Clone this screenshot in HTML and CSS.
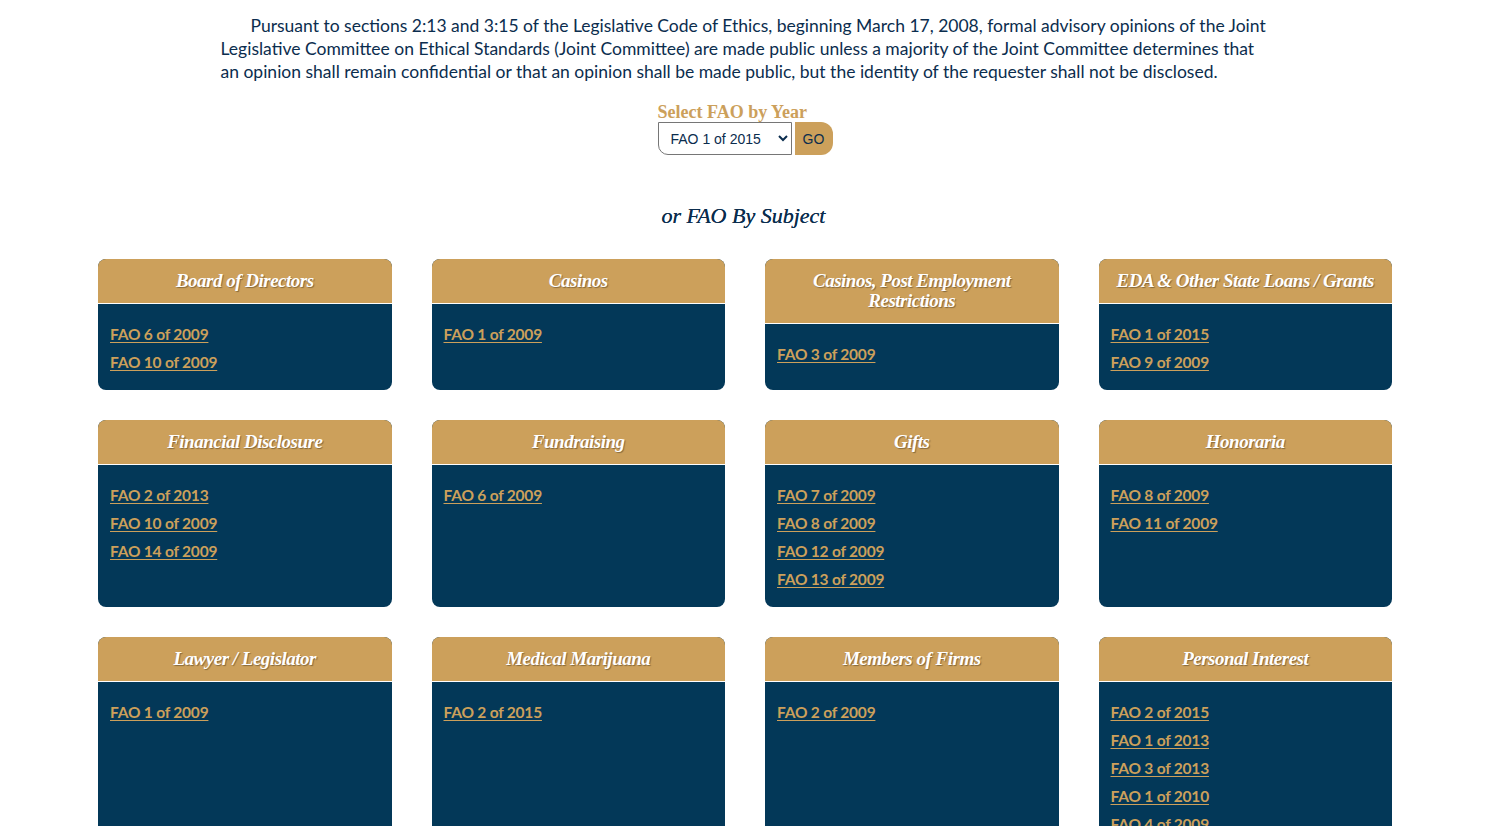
FILE: index.html
```html
<!DOCTYPE html>
<html lang="en">
<head>
<meta charset="utf-8">
<title>Formal Advisory Opinions</title>
<link rel="stylesheet" href="styles.css">
</head>
<body>
<main class="page">
  <p class="intro">Pursuant to sections 2:13 and 3:15 of the Legislative Code of Ethics, beginning March 17, 2008, formal advisory opinions of the Joint Legislative Committee on Ethical Standards (Joint Committee) are made public unless a majority of the Joint Committee determines that an opinion shall remain confidential or that an opinion shall be made public, but the identity of the requester shall not be disclosed.</p>

  <form class="year-form">
    <label class="year-label" for="year">Select FAO by Year</label>
    <div class="year-row">
      <select id="year" class="year-select">
        <option>FAO 1 of 2015</option>
        <option>FAO 2 of 2015</option>
        <option>FAO 1 of 2013</option>
      </select>
      <button type="button" class="go-btn">GO</button>
    </div>
  </form>

  <h2 class="subject-title">or FAO By Subject</h2>

  <section class="grid">
    <div class="card">
      <h3 class="card-head">Board of Directors</h3>
      <div class="card-body"><a href="#">FAO 6 of 2009</a><a href="#">FAO 10 of 2009</a></div>
    </div>
    <div class="card">
      <h3 class="card-head">Casinos</h3>
      <div class="card-body"><a href="#">FAO 1 of 2009</a></div>
    </div>
    <div class="card">
      <h3 class="card-head">Casinos, Post Employment Restrictions</h3>
      <div class="card-body"><a href="#">FAO 3 of 2009</a></div>
    </div>
    <div class="card">
      <h3 class="card-head">EDA &amp; Other State Loans / Grants</h3>
      <div class="card-body"><a href="#">FAO 1 of 2015</a><a href="#">FAO 9 of 2009</a></div>
    </div>

    <div class="card">
      <h3 class="card-head">Financial Disclosure</h3>
      <div class="card-body"><a href="#">FAO 2 of 2013</a><a href="#">FAO 10 of 2009</a><a href="#">FAO 14 of 2009</a></div>
    </div>
    <div class="card">
      <h3 class="card-head">Fundraising</h3>
      <div class="card-body"><a href="#">FAO 6 of 2009</a></div>
    </div>
    <div class="card">
      <h3 class="card-head">Gifts</h3>
      <div class="card-body"><a href="#">FAO 7 of 2009</a><a href="#">FAO 8 of 2009</a><a href="#">FAO 12 of 2009</a><a href="#">FAO 13 of 2009</a></div>
    </div>
    <div class="card">
      <h3 class="card-head">Honoraria</h3>
      <div class="card-body"><a href="#">FAO 8 of 2009</a><a href="#">FAO 11 of 2009</a></div>
    </div>

    <div class="card">
      <h3 class="card-head">Lawyer / Legislator</h3>
      <div class="card-body"><a href="#">FAO 1 of 2009</a></div>
    </div>
    <div class="card">
      <h3 class="card-head">Medical Marijuana</h3>
      <div class="card-body"><a href="#">FAO 2 of 2015</a></div>
    </div>
    <div class="card">
      <h3 class="card-head">Members of Firms</h3>
      <div class="card-body"><a href="#">FAO 2 of 2009</a></div>
    </div>
    <div class="card">
      <h3 class="card-head">Personal Interest</h3>
      <div class="card-body"><a href="#">FAO 2 of 2015</a><a href="#">FAO 1 of 2013</a><a href="#">FAO 3 of 2013</a><a href="#">FAO 1 of 2010</a><a href="#">FAO 4 of 2009</a><a href="#">FAO 5 of 2009</a></div>
    </div>
  </section>
</main>
</body>
</html>
```

FILE: styles.css
```css
html, body {
  margin: 0;
  padding: 0;
  background: #ffffff;
}

body {
  font-family: "Lato", "Noto Sans", sans-serif;
  color: #0b2d4e;
}

.page {
  display: flex;
  flex-direction: column;
  align-items: center;
  padding-top: 14px;
}

.intro {
  width: 1046px;
  margin: 0;
  font-size: 17.5px;
  line-height: 23px;
  text-indent: 30px;
  color: #0b2d4e;
}

.year-form {
  display: flex;
  flex-direction: column;
  align-items: flex-start;
  margin-top: 19px;
  margin-left: 3px;
}

.year-label {
  font-family: "Liberation Serif", serif;
  font-weight: bold;
  font-size: 18px;
  line-height: 20px;
  color: #cca05b;
}

.year-row {
  display: flex;
  align-items: center;
  gap: 3px;
}

.year-select {
  width: 134px;
  height: 33px;
  padding: 0 8px;
  font-family: "Liberation Sans", sans-serif;
  font-size: 14px;
  color: #0b2d4e;
  background: #ffffff;
  border: 1px solid #767676;
  border-radius: 0 0 0 10px;
}

.go-btn {
  height: 33px;
  width: 38px;
  padding: 0;
  border: none;
  border-radius: 0 12px 12px 0;
  background: #cca05b;
  color: #0b2d4e;
  font-family: "Liberation Sans", sans-serif;
  font-size: 14px;
}

.subject-title {
  margin: 47px 0 29px;
  font-family: "Liberation Serif", serif;
  font-style: italic;
  font-weight: normal;
  font-size: 22px;
  line-height: 28px;
  color: #0b2d4e;
  text-shadow: 0 0 0.5px #0b2d4e;
}

.grid {
  display: grid;
  grid-template-columns: repeat(4, 293.5px);
  column-gap: 40px;
  row-gap: 30px;
  margin-left: 3px;
  padding-bottom: 40px;
}

.card {
  display: flex;
  flex-direction: column;
  border-radius: 8px;
  overflow: hidden;
  background: #033858;
}

.card-head {
  margin: 0;
  padding: 12px 18px;
  background: #cca05b;
  border-bottom: 1px solid #ffffff;
  color: #ffffff;
  text-align: center;
  font-family: "Liberation Serif", serif;
  font-style: italic;
  font-weight: bold;
  font-size: 19px;
  line-height: 20px;
  letter-spacing: -0.5px;
  text-shadow: 1px 1px 1px rgba(0, 0, 0, 0.35);
}

.card-body {
  flex: 1;
  display: flex;
  flex-direction: column;
  align-items: flex-start;
  gap: 8px;
  padding: 20px 12px 18px;
}

.card-body a {
  color: #cca05b;
  font-size: 15.5px;
  font-weight: bold;
  letter-spacing: -0.2px;
  line-height: 20px;
  text-decoration: underline;
  text-underline-offset: 2px;
}
```
